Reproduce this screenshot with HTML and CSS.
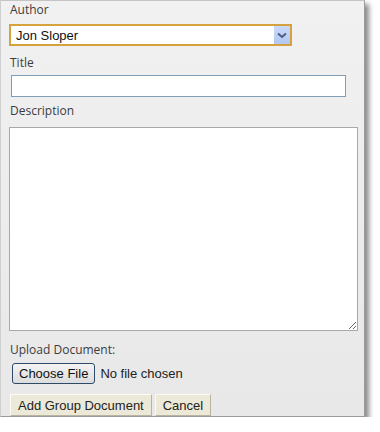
FILE: index.html
```html
<!DOCTYPE html>
<html lang="en">
<head>
    <meta charset="UTF-8">
    <title>Add Group Document</title>
    <link rel="stylesheet" href="styles.css">
</head>
<body>
    <div class="panel">
        <div class="label">Author</div>
        <div class="select-wrap">
            <select class="select">
                <option>Jon Sloper</option>
            </select>
            <span class="select-btn">
                <svg width="10" height="7" viewBox="0 0 10 7"><path d="M1 1.5 L5 5 L9 1.5" fill="none" stroke="#4a5d82" stroke-width="2"/></svg>
            </span>
        </div>

        <div class="label label-title">Title</div>
        <input type="text" class="text-input">

        <div class="label label-desc">Description</div>
        <textarea class="textarea"></textarea>

        <div class="label label-upload">Upload Document:</div>
        <div class="file-row">
            <span class="file-btn">Choose File</span>
            <span class="file-text">No file chosen</span>
        </div>

        <div class="actions">
            <button class="btn">Add Group Document</button>
            <button class="btn">Cancel</button>
        </div>
    </div>
</body>
</html>
```

FILE: styles.css
```css
body {
    margin: 0;
    background-color: #fff;
    font-family: 'Open Sans', sans-serif;
}
.panel {
    box-sizing: border-box;
    width: 365px;
    height: 417px;
    padding: 1px 0 0 8px;
    background: linear-gradient(#f1f1f1, #e8e8e8);
    border-top: 1px solid #c4c4c4;
    border-left: 1px solid #cfcfcf;
    border-right: 1px solid #9a9a9a;
    border-bottom: 1px solid #9a9a9a;
    box-shadow: 4px 4px 5px rgba(0, 0, 0, 0.45);
}
.label {
    font-size: 12px;
    line-height: 16px;
    color: #3c3c3c;
    padding-left: 1px;
}
.select-wrap {
    position: relative;
    width: 283px;
    margin-top: 6px;
}
.select {
    display: block;
    box-sizing: border-box;
    width: 283px;
    height: 22px;
    padding: 0 0 0 5px;
    border: 2px solid #d6a23e;
    border-radius: 0;
    background: #fff;
    font-family: 'Liberation Sans', Arial, sans-serif;
    font-size: 13px;
    color: #111;
    appearance: none;
    -webkit-appearance: none;
    outline: none;
}
.select-btn {
    position: absolute;
    right: 2px;
    top: 2px;
    width: 16px;
    height: 18px;
    background: linear-gradient(#cbdaf8, #b2c7f1);
    display: flex;
    align-items: center;
    justify-content: center;
}
.label-title {
    margin-top: 9px;
}
.text-input {
    display: block;
    box-sizing: border-box;
    width: 335px;
    height: 22px;
    margin: 4px 0 0 2px;
    border: 1px solid #7f9db9;
    background: #fff;
    outline: none;
}
.label-desc {
    margin-top: 6px;
}
.textarea {
    display: block;
    box-sizing: border-box;
    width: 349px;
    height: 204px;
    margin-top: 8px;
    border: 1px solid #a8a8a8;
    background: #fff;
    resize: both;
    outline: none;
}
.label-upload {
    margin-top: 11px;
}
.file-row {
    display: flex;
    align-items: center;
    gap: 5px;
    margin: 5px 0 0 3px;
    font-family: 'Liberation Sans', Arial, sans-serif;
    font-size: 13px;
    color: #222;
}
.file-btn {
    box-sizing: border-box;
    height: 21px;
    line-height: 19px;
    padding: 0 6px;
    border: 1px solid #2d4a6b;
    border-radius: 3px;
    background: linear-gradient(#f4f4f4, #dcdcdc);
    color: #111;
}
.actions {
    display: flex;
    gap: 3px;
    margin: 10px 0 0 1px;
}
.btn {
    box-sizing: border-box;
    height: 22px;
    padding: 0 7px;
    background-color: #ece9d8;
    border-top: 1px solid #fbfaf4;
    border-left: 1px solid #fbfaf4;
    border-right: 1px solid #b8b4a2;
    border-bottom: 1px solid #b8b4a2;
    font-family: 'Liberation Sans', Arial, sans-serif;
    font-size: 13px;
    color: #222;
}
```
